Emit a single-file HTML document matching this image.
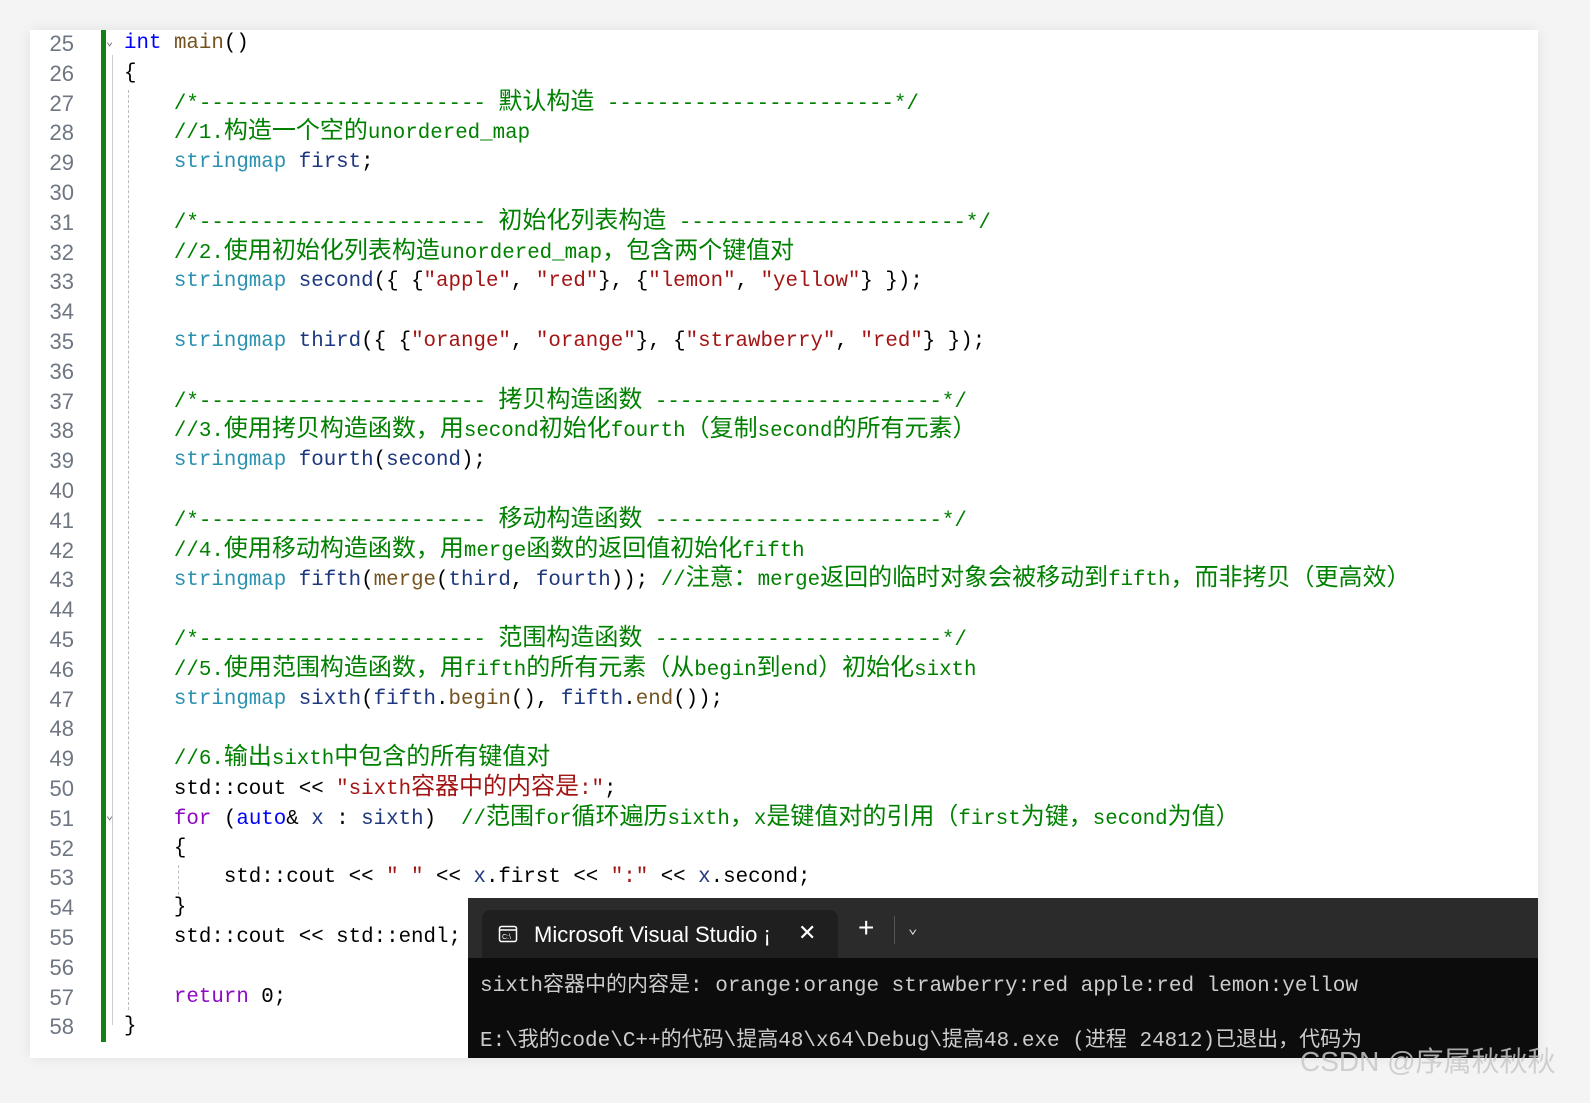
<!DOCTYPE html>
<html><head><meta charset="utf-8"><style>
body{margin:0;width:1590px;height:1103px;background:#f4f4f4;overflow:hidden;position:relative;font-family:"Liberation Mono","Noto Sans CJK SC",monospace}
.card{position:absolute;left:30px;top:30px;width:1508px;height:1028px;background:#fff;box-shadow:0 0 12px rgba(0,0,0,.08)}
.nums{position:absolute;left:30px;top:29px;width:44px;text-align:right;color:#6e7681;font-family:"Liberation Sans",sans-serif;font-size:22px;line-height:29.8px}
.bar{position:absolute;left:101px;top:30px;width:5px;height:1012px;background:#128212}
.code{position:absolute;left:124px;top:29px;font-size:20.8px;line-height:29.8px;color:#000}
.code div{height:29.8px;white-space:pre}
.c{font-family:"Noto Sans CJK SC",sans-serif;font-size:24px;line-height:20px}
.k{color:#0000ff}.t{color:#2b91af}.v{color:#1f377f}.s{color:#a31515}.f{color:#74531f}.cm{color:#008000}.p{color:#8f08c4}
.guide{position:absolute;border-left:1px dashed #bbb}
.term{position:absolute;left:468px;top:898px;width:1070px;height:160px;background:#0c0c0c;overflow:hidden}
.tabbar{position:absolute;left:0;top:0;width:1070px;height:60px;background:#2b2b2b}
.tab{position:absolute;left:14px;top:12px;width:356px;height:48px;background:#1f1f1f;border-radius:8px 8px 0 0;color:#fff;font-family:"Liberation Sans",sans-serif;font-size:22px}
.tout{position:absolute;left:12px;color:#cccccc;font-size:21px;white-space:pre;font-family:"Liberation Mono","Noto Sans CJK SC",monospace}
.wm{position:absolute;left:1300px;top:1040px;color:rgba(200,200,200,.85);font-family:"Liberation Sans","Noto Sans CJK SC",sans-serif;font-size:28px}
</style></head><body>
<div class="card"></div>
<div class="nums">25<br>26<br>27<br>28<br>29<br>30<br>31<br>32<br>33<br>34<br>35<br>36<br>37<br>38<br>39<br>40<br>41<br>42<br>43<br>44<br>45<br>46<br>47<br>48<br>49<br>50<br>51<br>52<br>53<br>54<br>55<br>56<br>57<br>58</div>
<div class="bar"></div>
<div class="guide" style="left:112px;top:55px;height:970px;border-left:1px solid #ccc"></div>
<div class="guide" style="left:128px;top:90px;height:920px"></div>
<div class="guide" style="left:178px;top:865px;height:30px"></div>
<div style="position:absolute;left:106px;top:34px;color:#666;font-size:12px">⌄</div>
<div style="position:absolute;left:106px;top:808px;color:#666;font-size:12px">⌄</div>
<div class="code"><div><span class="k">int</span> <span class="f">main</span>()</div><div>{</div><div class="cm">    /*----------------------- <span class="c">默认构造</span> -----------------------*/</div><div class="cm">    //1.<span class="c">构造一个空的</span>unordered_map</div><div>    <span class="t">stringmap</span> <span class="v">first</span>;</div><div></div><div class="cm">    /*----------------------- <span class="c">初始化列表构造</span> -----------------------*/</div><div class="cm">    //2.<span class="c">使用初始化列表构造</span>unordered_map<span class="c">，包含两个键值对</span></div><div>    <span class="t">stringmap</span> <span class="v">second</span>({ {<span class="s">"apple"</span>, <span class="s">"red"</span>}, {<span class="s">"lemon"</span>, <span class="s">"yellow"</span>} });</div><div></div><div>    <span class="t">stringmap</span> <span class="v">third</span>({ {<span class="s">"orange"</span>, <span class="s">"orange"</span>}, {<span class="s">"strawberry"</span>, <span class="s">"red"</span>} });</div><div></div><div class="cm">    /*----------------------- <span class="c">拷贝构造函数</span> -----------------------*/</div><div class="cm">    //3.<span class="c">使用拷贝构造函数，用</span>second<span class="c">初始化</span>fourth<span class="c">（复制</span>second<span class="c">的所有元素）</span></div><div>    <span class="t">stringmap</span> <span class="v">fourth</span>(<span class="v">second</span>);</div><div></div><div class="cm">    /*----------------------- <span class="c">移动构造函数</span> -----------------------*/</div><div class="cm">    //4.<span class="c">使用移动构造函数，用</span>merge<span class="c">函数的返回值初始化</span>fifth</div><div>    <span class="t">stringmap</span> <span class="v">fifth</span>(<span class="f">merge</span>(<span class="v">third</span>, <span class="v">fourth</span>)); <span class="cm">//<span class="c">注意：</span>merge<span class="c">返回的临时对象会被移动到</span>fifth<span class="c">，而非拷贝（更高效）</span></span></div><div></div><div class="cm">    /*----------------------- <span class="c">范围构造函数</span> -----------------------*/</div><div class="cm">    //5.<span class="c">使用范围构造函数，用</span>fifth<span class="c">的所有元素（从</span>begin<span class="c">到</span>end<span class="c">）初始化</span>sixth</div><div>    <span class="t">stringmap</span> <span class="v">sixth</span>(<span class="v">fifth</span>.<span class="f">begin</span>(), <span class="v">fifth</span>.<span class="f">end</span>());</div><div></div><div class="cm">    //6.<span class="c">输出</span>sixth<span class="c">中包含的所有键值对</span></div><div>    std::cout &lt;&lt; <span class="s">"sixth<span class="c">容器中的内容是</span>:"</span>;</div><div>    <span class="p">for</span> (<span class="k">auto</span>&amp; <span class="v">x</span> : <span class="v">sixth</span>)  <span class="cm">//<span class="c">范围</span>for<span class="c">循环遍历</span>sixth<span class="c">，</span>x<span class="c">是键值对的引用（</span>first<span class="c">为键，</span>second<span class="c">为值）</span></span></div><div>    {</div><div>        std::cout &lt;&lt; <span class="s">" "</span> &lt;&lt; <span class="v">x</span>.first &lt;&lt; <span class="s">":"</span> &lt;&lt; <span class="v">x</span>.second;</div><div>    }</div><div>    std::cout &lt;&lt; std::endl;</div><div></div><div>    <span class="p">return</span> 0;</div><div>}</div></div>
<div class="term">
 <div class="tabbar">
  <div class="tab">
   <svg style="position:absolute;left:16px;top:14px" width="20" height="20" viewBox="0 0 20 20"><rect x="1.5" y="2.5" width="17" height="15" rx="2" fill="none" stroke="#fff" stroke-width="1.5"/><line x1="1.5" y1="6" x2="18.5" y2="6" stroke="#fff" stroke-width="1.5"/><text x="4" y="15" fill="#fff" font-size="7" font-family="Liberation Sans">C:\</text></svg>
   <span style="position:absolute;left:52px;top:12px;white-space:nowrap">Microsoft Visual Studio ¡</span>
   <span style="position:absolute;left:316px;top:10px;font-size:22px">✕</span>
  </div>
  <span style="position:absolute;left:390px;top:18px;color:#fff;font-size:28px;font-family:'Liberation Sans';line-height:24px">+</span>
  <div style="position:absolute;left:426px;top:18px;width:1px;height:28px;background:#555"></div>
  <span style="position:absolute;left:440px;top:20px;color:#ddd;font-size:16px">⌄</span>
 </div>
 <div class="tout" style="top:70px">sixth容器中的内容是: orange:orange strawberry:red apple:red lemon:yellow</div>
 <div class="tout" style="top:125px">E:\我的code\C++的代码\提高48\x64\Debug\提高48.exe (进程 24812)已退出，代码为</div>
</div>
<div class="wm">CSDN @序属秋秋秋</div>
</body></html>
